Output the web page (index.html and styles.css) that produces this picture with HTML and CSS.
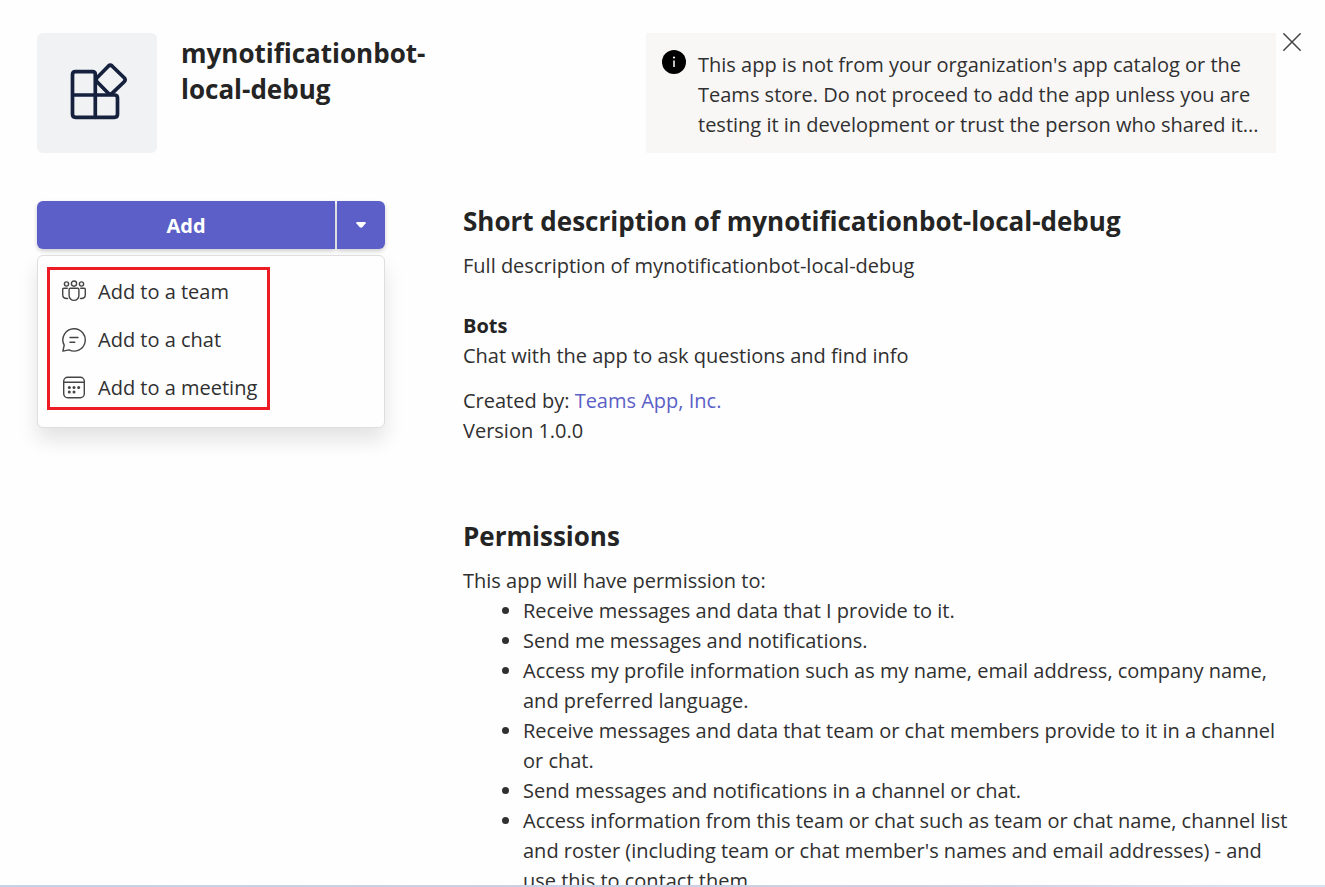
FILE: index.html
```html
<!DOCTYPE html>
<html lang="en">
<head>
<meta charset="utf-8">
<meta name="viewport" content="width=device-width, initial-scale=1">
<title>mynotificationbot-local-debug</title>
<link rel="stylesheet" href="styles.css">
</head>
<body>
<main class="dialog">
  <header class="header">
    <div class="app-icon">
      <svg viewBox="0 0 120 120" fill="none" stroke="#15213d" stroke-width="3.7" stroke-linejoin="round" aria-hidden="true">
        <path d="M38.5 38.7H55.5Q58.3 38.7 58.3 41.5V84.3H38.5Q35.5 84.3 35.5 81.3V41.7Q35.5 38.7 38.5 38.7Z"/>
        <path d="M35.5 62H77.5Q80.5 62 80.5 65V81.3Q80.5 84.3 77.5 84.3H58.3"/>
        <path d="M71.3 33.2Q73.3 31.4 75.3 33.2L87.2 44.8Q89.2 46.8 87.2 48.8L75.3 60.2Q73.3 62 71.3 60.2L60 48.8Q58.2 46.8 60 44.8Z"/>
      </svg>
    </div>
    <h1 class="title">mynotificationbot-local-debug</h1>
    <div class="notice" role="note">
      <svg class="info" viewBox="0 0 24 24" aria-hidden="true"><circle cx="12" cy="12" r="12" fill="#000"/><path d="M12 10.5V17" stroke="#fff" stroke-width="1.5"/><circle cx="12" cy="7.5" r="1.1" fill="#fff"/></svg>
      <p>This app is not from your organization's app catalog or the Teams store. Do not proceed to add the app unless you are testing it in development or trust the person who shared it...</p>
    </div>
    <button class="close" type="button" aria-label="Close">
      <svg viewBox="0 0 18 18" stroke="#444" stroke-width="1.5" stroke-linecap="round" aria-hidden="true"><path d="M.8.8 17.2 17.2M17.2.8.8 17.2"/></svg>
    </button>
  </header>
  <div class="content">
    <aside class="actions">
      <div class="split">
        <button class="add" type="button">Add</button>
        <button class="more" type="button" aria-label="More add options">
          <svg viewBox="0 0 10 6" fill="#fff" aria-hidden="true"><path d="M1 0H9Q10 0 9.7 1.2L6.5 5Q5 6.6 3.5 5L.3 1.2Q0 0 1 0Z"/></svg>
        </button>
      </div>
      <div class="menu">
        <button class="item" type="button">
          <svg viewBox="0 0 24 24" aria-hidden="true"><circle cx="12" cy="3.6" r="2.6"/><circle cx="4.5" cy="4" r="2.1"/><circle cx="19.5" cy="4" r="2.1"/><path d="M8.2 8.2H15.8Q16.9 8.2 16.9 9.3V15.5A4.9 4.9 0 0 1 7.1 15.5V9.3Q7.1 8.2 8.2 8.2ZM5.3 8.2H1.8Q.7 8.2.7 9.3V14.5Q.7 18.5 4.8 18.5H5.6M18.7 8.2H22.2Q23.3 8.2 23.3 9.3V14.5Q23.3 18.5 19.2 18.5H18.4"/></svg>
          Add to a team
        </button>
        <button class="item" type="button">
          <svg viewBox="0 0 24 24" aria-hidden="true"><path d="M12.2.7A11.2 11.2 0 1 1 7 21.9L.9 23.1 2.2 17.2A11.2 11.2 0 0 1 12.2.7ZM8 9.5H16M8 14.3H12.8"/></svg>
          Add to a chat
        </button>
        <button class="item" type="button">
          <svg viewBox="0 0 24 24" aria-hidden="true"><rect x="1.7" y="1.2" width="20.6" height="20.6" rx="4"/><path d="M1.7 6.3H22.3"/><g fill="#444" stroke="none"><circle cx="7.3" cy="11.5" r="1.5"/><circle cx="12" cy="11.5" r="1.5"/><circle cx="16.7" cy="11.5" r="1.5"/><circle cx="7.3" cy="16" r="1.5"/><circle cx="12" cy="16" r="1.5"/></g></svg>
          Add to a meeting
        </button>
      </div>
    </aside>
    <article class="details">
      <section class="about">
        <h2>Short description of mynotificationbot-local-debug</h2>
        <p>Full description of mynotificationbot-local-debug</p>
        <h3>Bots</h3>
        <p>Chat with the app to ask questions and find info</p>
        <p class="meta">Created by: <a href="#">Teams App, Inc.</a></p>
        <p>Version 1.0.0</p>
      </section>
      <section>
        <h2>Permissions</h2>
        <p>This app will have permission to:</p>
        <ul>
          <li>Receive messages and data that I provide to it.</li>
          <li>Send me messages and notifications.</li>
          <li>Access my profile information such as my name, email address, company name, and preferred language.</li>
          <li>Receive messages and data that team or chat members provide to it in a channel or chat.</li>
          <li>Send messages and notifications in a channel or chat.</li>
          <li>Access information from this team or chat such as team or chat name, channel list and roster (including team or chat member's names and email addresses) - and use this to contact them.</li>
        </ul>
      </section>
    </article>
  </div>
</main>
<div class="page-edge"></div>
</body>
</html>
```
FILE: styles.css
```css
* { box-sizing: border-box; }
body {
  display: flex;
  flex-direction: column;
  height: 100vh;
  margin: 0;
  color: #303030;
  background: #fefefe;
  font: 20px/30px "Open Sans", "Noto Sans", sans-serif;
}
h1, h2, h3, p, ul { margin: 0; }
h1, h2, h3 { color: #242424; }
button { font: inherit; color: inherit; border: 0; padding: 0; background: none; cursor: pointer; }
svg { display: block; flex: none; }
.dialog {
  display: flex;
  flex: 1;
  flex-direction: column;
  min-height: 0;
  padding: 33px 24px 0 37px;
  overflow: hidden;
}
.page-edge { flex: none; height: 2px; background: linear-gradient(90deg, #c3d3ea, #cfcfe2 70%, #d6e2f4 95%); }
.header { display: flex; flex: none; align-items: flex-start; }
.app-icon { flex: none; width: 120px; height: 120px; border-radius: 6px; background: #f1f2f4; }
.title {
  width: 264px;
  margin-left: 24px;
  padding-top: 2px;
  font-size: 26px;
  line-height: 36px;
  font-weight: 700;
}
.notice {
  display: flex;
  flex: 0 1 630px;
  gap: 12px;
  min-height: 120px;
  margin-left: auto;
  padding: 17px 16px 13px;
  background: #f8f7f6;
}
.info { width: 24px; height: 24px; }
.close { flex: none; margin-left: 7px; }
.close svg { width: 18px; height: 18px; }
.content { display: flex; flex: 1; gap: 78px; min-height: 0; padding-top: 48px; }
.actions { flex: none; width: 348px; }
.split { display: flex; gap: 2px; }
.add, .more { height: 48px; background: #5b5fc7; color: #fff; box-shadow: 0 2px 4px rgb(0 0 0 / 20%); }
.add { flex: 1; padding-top: 2px; border-radius: 6px 0 0 6px; font-weight: 700; }
.more { display: grid; place-items: center; width: 48px; border-radius: 0 6px 6px 0; }
.more svg { width: 10px; height: 6px; }
.menu {
  position: relative;
  margin-top: 6px;
  padding: 12px 0 15px;
  border: 1px solid #dedede;
  border-radius: 6px;
  background: #fefefe;
  box-shadow: 0 12px 20px rgb(0 0 0 / 11%);
}
.menu::after {
  content: "";
  position: absolute;
  inset: 11px 114px 17px 9px;
  border: 3px solid #ed1c24;
  pointer-events: none;
}
.item { display: flex; align-items: center; gap: 12px; width: 100%; height: 48px; padding-left: 24px; }
.item svg { width: 24px; height: 24px; fill: none; stroke: #444; stroke-width: 1.4; stroke-linejoin: round; stroke-linecap: round; }
.details { flex: 1; padding: 2px 8px 0 0; }
h2 { margin-bottom: 12px; font-size: 26px; line-height: 36px; font-weight: 700; }
h3 { margin-top: 30px; font-size: 20px; line-height: 30px; font-weight: 700; }
.meta { margin-top: 15px; }
.about { margin-bottom: 72px; }
a { color: #5b5fc7; text-decoration: none; }
ul { padding-left: 60px; }
```
